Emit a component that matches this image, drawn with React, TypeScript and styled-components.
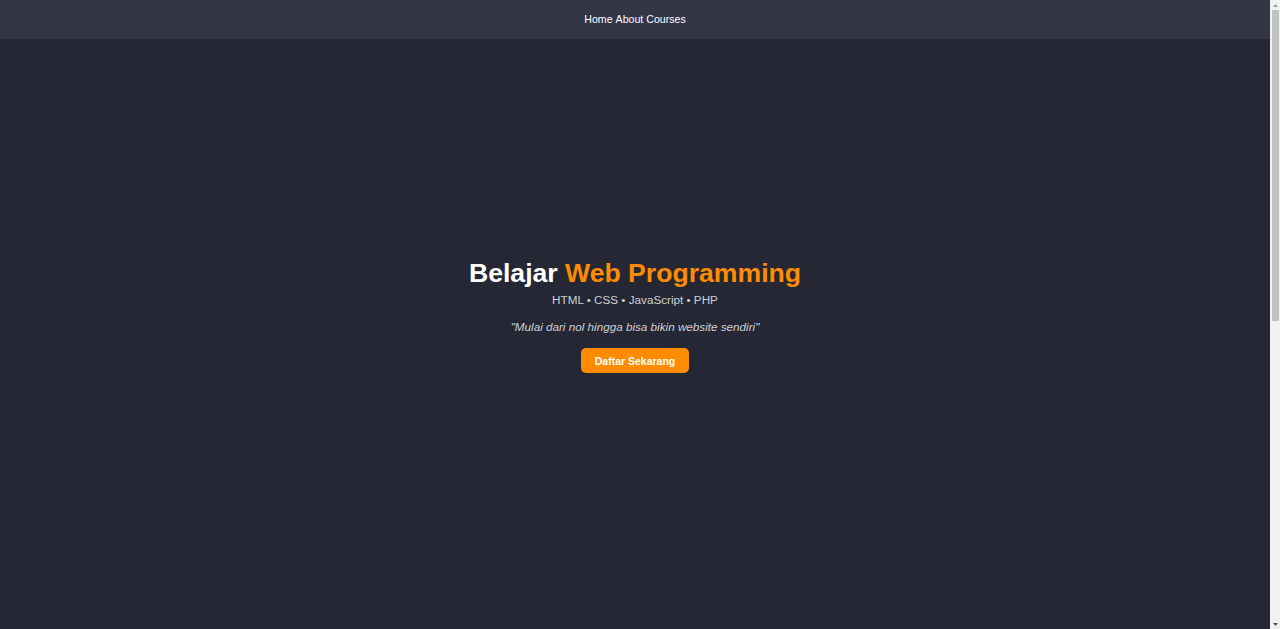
import React from "react";
import styled, { createGlobalStyle } from "styled-components";

const Global = createGlobalStyle`
  html, body { margin: 0; padding: 0; }
  html::-webkit-scrollbar { display: none; }
  body {
    background: #252834;
    font-family: "Liberation Sans", Arial, sans-serif;
    color: #ffffff;
  }
`;

const Page = styled.div`
  margin-right: 10px;
`;

const Nav = styled.nav`
  position: fixed;
  top: 0;
  left: 0;
  right: 10px;
  height: 39px;
  padding-bottom: 2px;
  box-sizing: border-box;
  background: #333647;
  display: flex;
  align-items: center;
  justify-content: center;
  gap: 3px;
  z-index: 10;
`;

const NavLink = styled.a`
  color: #ffffff;
  font-size: 10.6px;
  text-decoration: none;
`;

const Hero = styled.section`
  height: 100vh;
  display: flex;
  flex-direction: column;
  align-items: center;
  justify-content: center;
  text-align: center;
`;

const Title = styled.h1`
  margin: 0;
  font-size: 26.6px;
  font-weight: 700;
  line-height: 32px;
  color: #ffffff;
`;

const Accent = styled.span`
  color: #ff8c00;
`;

const Stack = styled.p`
  margin: 3px 0 0;
  font-size: 11.7px;
  line-height: 15px;
  color: #cfd0d6;
`;

const Quote = styled.p`
  margin: 12px 0 0;
  font-size: 11.7px;
  line-height: 15px;
  font-style: italic;
  color: #cfd0d6;
`;

const Button = styled.button`
  margin-top: 14px;
  margin-bottom: -1px;
  background: #ff8c00;
  color: #ffffff;
  border: none;
  border-radius: 5px;
  font-family: "Liberation Sans", Arial, sans-serif;
  font-size: 10.5px;
  font-weight: 700;
  padding: 0 14px;
  height: 25px;
  white-space: nowrap;
  cursor: pointer;
`;

const Below = styled.section`
  height: 570px;
`;

const ScrollTrack = styled.div`
  position: fixed;
  top: 0;
  right: 0;
  bottom: 0;
  width: 10px;
  background: #f1f1f1;
  display: flex;
  flex-direction: column;
  align-items: center;
  z-index: 20;
`;

const Arrow = styled.div<{ $down?: boolean }>`
  width: 10px;
  height: 10px;
  display: flex;
  align-items: center;
  justify-content: center;
  order: ${(p) => (p.$down ? 3 : 0)};
  margin-top: ${(p) => (p.$down ? "auto" : "0")};
`;

const Thumb = styled.div`
  order: 1;
  width: 7px;
  height: 311px;
  background: #c1c1c1;
`;

export default function App() {
  return (
    <>
      <Global />
      <Page>
        <Nav>
          <NavLink href="#">Home</NavLink>
          <NavLink href="#">About</NavLink>
          <NavLink href="#">Courses</NavLink>
        </Nav>
        <Hero>
          <Title>
            Belajar <Accent>Web Programming</Accent>
          </Title>
          <Stack>HTML • CSS • JavaScript • PHP</Stack>
          <Quote>"Mulai dari nol hingga bisa bikin website sendiri"</Quote>
          <Button>Daftar Sekarang</Button>
        </Hero>
        <Below />
      </Page>
      <ScrollTrack>
        <Arrow>
          <svg width="5" height="3" viewBox="0 0 5 3">
            <path d="M0 3 L2.5 0 L5 3 Z" fill="#a3a3a3" />
          </svg>
        </Arrow>
        <Thumb />
        <Arrow $down>
          <svg width="5" height="3" viewBox="0 0 5 3">
            <path d="M0 0 L2.5 3 L5 0 Z" fill="#505050" />
          </svg>
        </Arrow>
      </ScrollTrack>
    </>
  );
}
